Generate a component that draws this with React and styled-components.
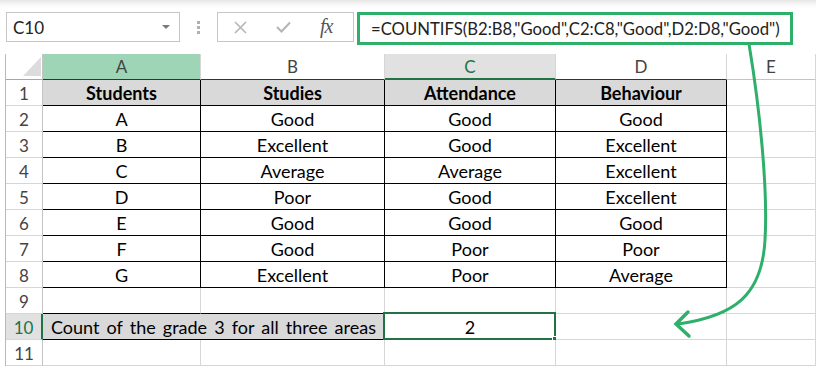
import React from 'react';
import styled, { createGlobalStyle } from 'styled-components';

const GREEN = '#217346';
const ANNOT = '#2eb06b';
const GRID = '#d6d6d6';

const Global = createGlobalStyle`
  html, body { margin: 0; padding: 0; background: #fff; }
  body { width: 816px; height: 366px; overflow: hidden; font-family: Lato, "Liberation Sans", sans-serif; }
`;

const Page = styled.div`
  position: relative;
  width: 816px;
  height: 366px;
  background: #fff;
`;

const FormulaBar = styled.div`
  box-sizing: border-box;
  height: 54px;
  display: flex;
  align-items: flex-start;
  padding: 12px 0 0 6px;
  background: linear-gradient(#e6e6e6 0px, #f6f6f6 4px, #fff 8px);
`;

const NameBox = styled.div`
  box-sizing: border-box;
  width: 174px;
  height: 30px;
  border: 1px solid #c6c6c6;
  background: #fff;
  display: flex;
  align-items: center;
  justify-content: space-between;
  padding: 0 9px 0 6px;
  font-size: 17px;
  color: #222;
`;

const Caret = styled.span`
  width: 0;
  height: 0;
  border-left: 4px solid transparent;
  border-right: 4px solid transparent;
  border-top: 4px solid #7a7a7a;
`;

const Grip = styled.div`
  width: 3px;
  height: 13px;
  margin: 9px 17px 0 17px;
  background: repeating-linear-gradient(to bottom, #b0b0b0 0 3px, transparent 3px 5px);
`;

const ButtonBox = styled.div`
  box-sizing: border-box;
  width: 137px;
  height: 30px;
  border: 1px solid #c6c6c6;
  background: #fff;
  display: flex;
  align-items: center;
  gap: 29px;
  padding-left: 16px;
`;

const Fx = styled.span`
  font-family: "Liberation Serif", serif;
  font-style: italic;
  font-size: 20px;
  color: #555;
  letter-spacing: -1px;
  margin-top: -2px;
`;

const FormulaInput = styled.div`
  box-sizing: border-box;
  width: 436px;
  height: 33px;
  margin-left: 3px;
  border: 3px solid ${ANNOT};
  background: #fff;
  display: flex;
  align-items: center;
  padding-left: 11px;
  font-size: 16.7px;
  color: #222;
  white-space: nowrap;
`;

const Sheet = styled.div`
  display: grid;
  grid-template-columns: 37px 158px 184px 171px 171px 89px;
  grid-auto-rows: 26px;
  margin-left: 5px;
  border-left: 1px solid #b9b9b9;
`;

const Corner = styled.div`
  box-sizing: border-box;
  border-right: 1px solid #c4c4c4;
  border-bottom: 1px solid #a6a6a6;
  display: flex;
  align-items: flex-end;
  justify-content: flex-end;
  padding: 0 1px 3px 0;
`;

const ColHeader = styled.div`
  box-sizing: border-box;
  display: flex;
  align-items: center;
  justify-content: center;
  font-size: 17px;
  color: ${(p) => (p.$active ? GREEN : '#444')};
  background: ${(p) => p.$bg || '#fff'};
  border-right: 1px solid ${GRID};
  border-bottom: ${(p) => (p.$active ? `2px solid ${GREEN}` : `1px solid ${p.$dark ? '#333' : '#c4c4c4'}`)};
`;

const RowHeader = styled.div`
  box-sizing: border-box;
  display: flex;
  align-items: center;
  justify-content: center;
  font-size: 17px;
  padding-top: 1px;
  color: ${(p) => (p.$active ? GREEN : '#444')};
  background: ${(p) => (p.$active ? '#e1e1e1' : '#fff')};
  border-right: ${(p) => (p.$active ? `2px solid ${GREEN}` : '1px solid #c4c4c4')};
  border-bottom: 1px solid ${GRID};
`;

const Cell = styled.div`
  box-sizing: border-box;
  position: relative;
  grid-column: span ${(p) => p.$span || 1};
  display: flex;
  align-items: center;
  justify-content: center;
  padding-top: 1px;
  font-size: 18px;
  word-spacing: 2.5px;
  font-weight: ${(p) => (p.$bold ? 700 : 400)};
  color: #000;
  background: ${(p) => p.$fill || '#fff'};
  border-right: 1px solid ${(p) => p.$right || GRID};
  border-bottom: 1px solid ${(p) => p.$bottom || GRID};
  white-space: nowrap;
`;

const Selection = styled.div`
  position: absolute;
  left: -2px;
  top: -2px;
  right: -1px;
  bottom: -1px;
  border: 2px solid ${GREEN};
  pointer-events: none;
`;

const FillHandle = styled.div`
  position: absolute;
  right: -4px;
  bottom: -4px;
  width: 5px;
  height: 5px;
  background: ${GREEN};
  border: 1px solid #fff;
`;

const Overlay = styled.svg`
  position: absolute;
  left: 0;
  top: 0;
  pointer-events: none;
`;

const table = [
  ['Students', 'Studies', 'Attendance', 'Behaviour'],
  ['A', 'Good', 'Good', 'Good'],
  ['B', 'Excellent', 'Good', 'Excellent'],
  ['C', 'Average', 'Average', 'Excellent'],
  ['D', 'Poor', 'Good', 'Excellent'],
  ['E', 'Good', 'Good', 'Good'],
  ['F', 'Good', 'Poor', 'Poor'],
  ['G', 'Excellent', 'Poor', 'Average'],
];

const cols = ['A', 'B', 'C', 'D', 'E'];

export default function App() {
  const rows = [];
  table.forEach((r, i) => {
    const n = i + 1;
    rows.push(<RowHeader key={`h${n}`}>{n}</RowHeader>);
    r.forEach((v, j) => (
      rows.push(
        <Cell
          key={`c${n}${j}`}
          $right="#000"
          $bottom="#000"
          $bold={i === 0}
          $fill={i === 0 ? '#d9d9d9' : undefined}
        >
          {v}
        </Cell>
      )
    ));
    rows.push(<Cell key={`e${n}`} />);
  });

  rows.push(<RowHeader key="h9">9</RowHeader>);
  rows.push(<Cell key="c9a" $bottom="#000" />);
  rows.push(<Cell key="c9b" $bottom="#000" />);
  rows.push(<Cell key="c9c" />);
  rows.push(<Cell key="c9d" />);
  rows.push(<Cell key="c9e" />);

  rows.push(<RowHeader key="h10" $active>10</RowHeader>);
  rows.push(
    <Cell key="c10ab" $span={2} $fill="#d9d9d9" $right="#000" $bottom="#000">
      Count of the grade 3 for all three areas
    </Cell>
  );
  rows.push(
    <Cell key="c10c">
      2
      <Selection />
      <FillHandle />
    </Cell>
  );
  rows.push(<Cell key="c10d" />);
  rows.push(<Cell key="c10e" />);

  rows.push(<RowHeader key="h11">11</RowHeader>);
  cols.forEach((c) => rows.push(<Cell key={`c11${c}`} />));

  return (
    <Page>
      <Global />
      <FormulaBar>
        <NameBox>
          <span>C10</span>
          <Caret />
        </NameBox>
        <Grip />
        <ButtonBox>
          <svg width="13" height="13" viewBox="0 0 13 13">
            <path d="M1 1 L12 12 M12 1 L1 12" stroke="#b5b5b5" strokeWidth="1.6" fill="none" />
          </svg>
          <svg width="15" height="12" viewBox="0 0 15 12">
            <path d="M1 6 L5.5 10.5 L14 1.5" stroke="#b5b5b5" strokeWidth="2" fill="none" />
          </svg>
          <Fx>fx</Fx>
        </ButtonBox>
        <FormulaInput>=COUNTIFS(B2:B8,"Good",C2:C8,"Good",D2:D8,"Good")</FormulaInput>
      </FormulaBar>
      <Sheet>
        <Corner>
          <svg width="18" height="19" viewBox="0 0 18 19">
            <path d="M18 0 L18 19 L0 19 Z" fill="#dcdcdc" />
          </svg>
        </Corner>
        <ColHeader $bg="#9fd5b7" $dark>A</ColHeader>
        <ColHeader $dark>B</ColHeader>
        <ColHeader $bg="#e1e1e1" $active>C</ColHeader>
        <ColHeader $dark>D</ColHeader>
        <ColHeader>E</ColHeader>
        {rows}
      </Sheet>
      <Overlay width="816" height="366" viewBox="0 0 816 366">
        <path
          d="M749 44 C 760 110, 768 190, 765 240 C 762 295, 735 316, 678 324"
          stroke={ANNOT}
          strokeWidth="3"
          fill="none"
          strokeLinecap="round"
        />
        <path
          d="M688 312 L676 324 L689 336"
          stroke={ANNOT}
          strokeWidth="3.5"
          fill="none"
          strokeLinejoin="miter"
          strokeLinecap="round"
        />
      </Overlay>
    </Page>
  );
}
